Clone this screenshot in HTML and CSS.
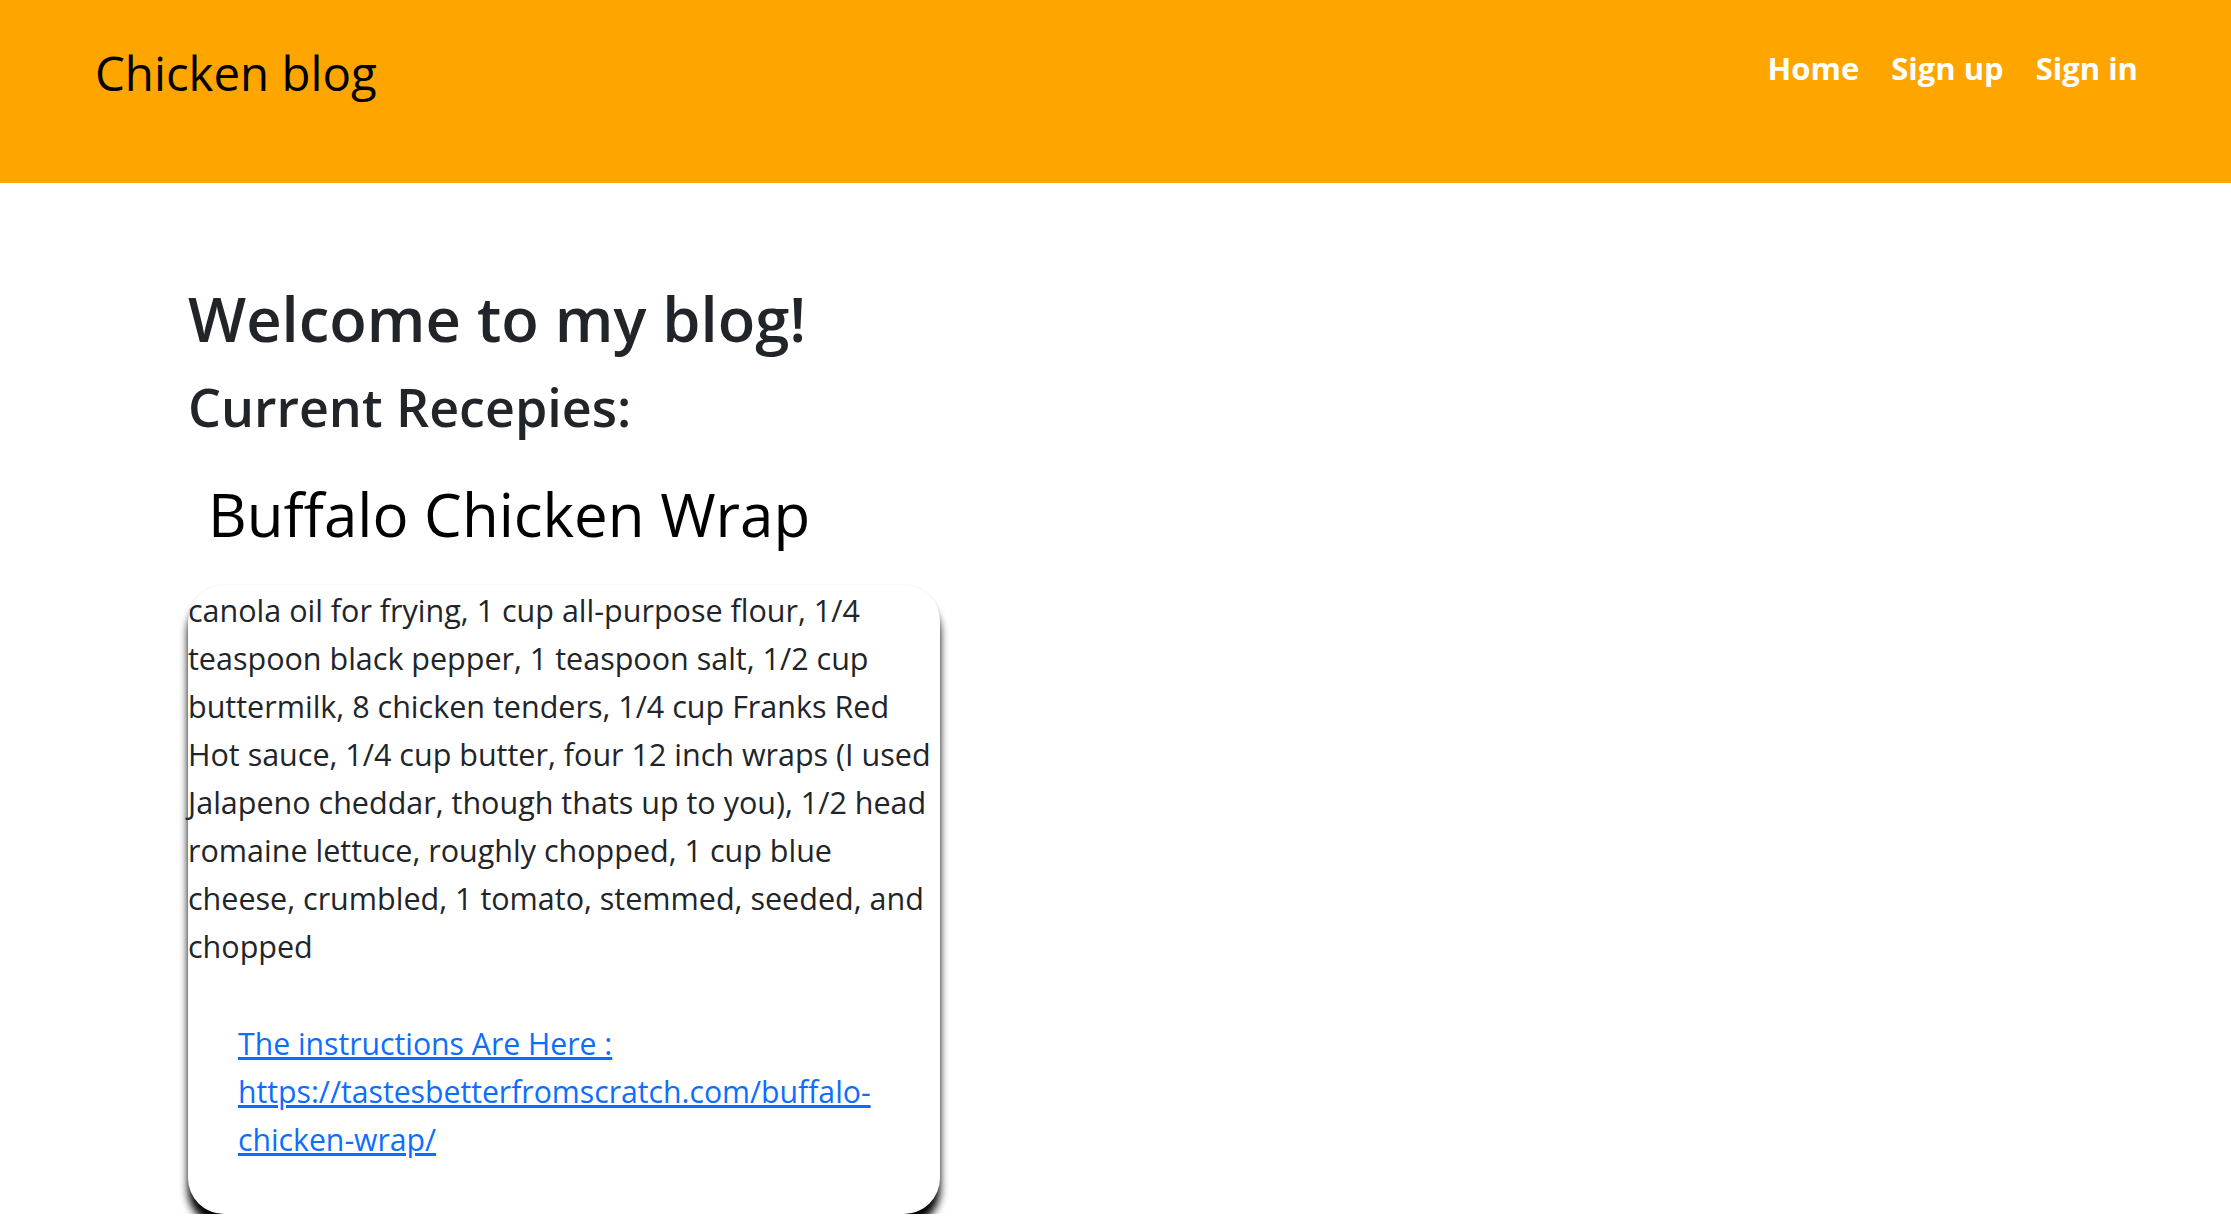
FILE: index.html
```html
<!DOCTYPE html>
<html lang="en">
<head>
<meta charset="utf-8">
<title>Chicken blog</title>
<link rel="stylesheet" href="styles.css">
</head>
<body>
<header class="topbar">
  <a class="brand" href="#">Chicken blog</a>
  <nav class="nav">
    <a class="nav-link" href="#">Home</a>
    <a class="nav-link" href="#">Sign up</a>
    <a class="nav-link" href="#">Sign in</a>
  </nav>
</header>
<main class="content">
  <h1 class="title">Welcome to my blog!</h1>
  <h2 class="subtitle">Current Recepies:</h2>
  <h3 class="recipe-name">Buffalo Chicken Wrap</h3>
  <article class="card">
    <p class="ingredients">canola oil for frying, 1 cup all-purpose flour, 1/4 teaspoon black pepper, 1 teaspoon salt, 1/2 cup buttermilk, 8 chicken tenders, 1/4 cup Franks Red Hot sauce, 1/4 cup butter, four 12 inch wraps (I used Jalapeno cheddar, though thats up to you), 1/2 head romaine lettuce, roughly chopped, 1 cup blue cheese, crumbled, 1 tomato, stemmed, seeded, and chopped</p>
    <p class="instructions"><a class="link" href="#">The instructions Are Here : https://tastesbetterfromscratch.com/buffalo-chicken-wrap/</a></p>
  </article>
</main>
</body>
</html>
```
FILE: styles.css
```css
html, body {
  margin: 0;
  padding: 0;
  background: #ffffff;
}

body {
  font-family: "Open Sans", "Noto Sans", sans-serif;
  color: #212529;
}

.topbar {
  background: #ffa500;
  height: 183px;
  box-sizing: border-box;
  padding: 43px 77px 0 95px;
  display: flex;
  justify-content: space-between;
  align-items: flex-start;
}

.brand {
  color: #000000;
  text-decoration: none;
  font-size: 47.4px;
  line-height: 60px;
  font-weight: 400;
}

.nav {
  display: flex;
  margin-top: 3px;
}

.nav-link {
  color: #ffffff;
  text-decoration: none;
  font-weight: 700;
  font-size: 31px;
  line-height: 44px;
  padding: 0 16px;
}

.content {
  padding: 98px 0 0 188px;
}

.title {
  margin: 0;
  font-size: 61.5px;
  line-height: 74px;
  font-weight: 600;
}

.subtitle {
  margin: 21px 0 0;
  font-size: 52px;
  line-height: 62px;
  font-weight: 600;
}

.recipe-name {
  margin: 41px 0 0;
  padding-left: 20px;
  font-size: 60px;
  line-height: 70px;
  font-weight: 400;
  color: #000000;
}

.card {
  margin-top: 36px;
  width: 752px;
  background: #ffffff;
  border-radius: 36px;
  box-shadow: 0 12px 8px #000000, 0 0 2px rgba(0, 0, 0, 0.08);
  padding: 1px 0 50px;
  box-sizing: border-box;
}

.ingredients {
  margin: 0;
  max-width: 748px;
  font-size: 30.5px;
  line-height: 48px;
}

.instructions {
  margin: 50px 0 0 50px;
  width: 660px;
  font-size: 30.2px;
  line-height: 48px;
}

.link {
  color: #0d6efd;
  text-decoration: underline;
}
```
